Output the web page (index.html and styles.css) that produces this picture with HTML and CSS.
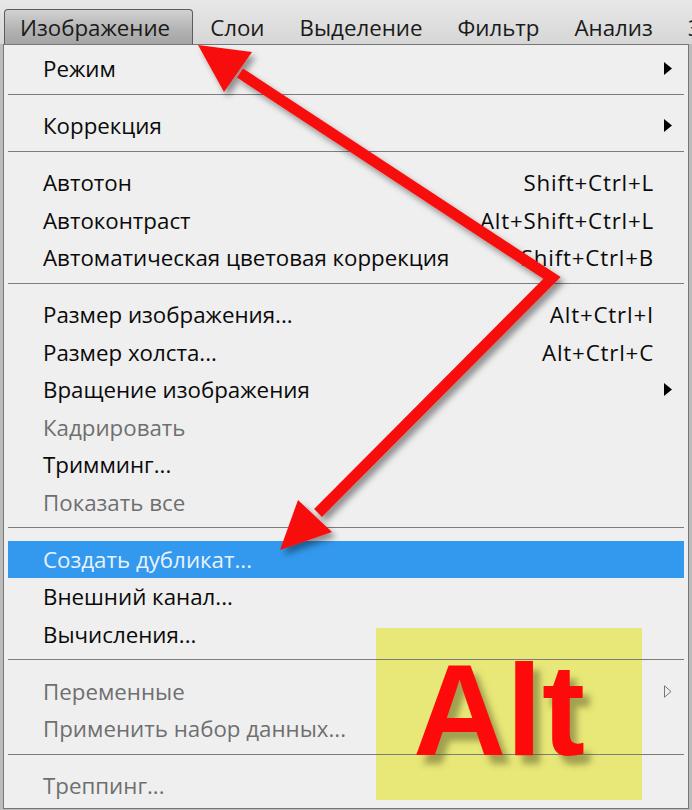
FILE: index.html
```html
<!DOCTYPE html>
<html lang="ru">
<head>
    <meta charset="UTF-8">
    <title>Меню Изображение</title>
    <link rel="stylesheet" href="styles.css">
</head>
<body>
    <div class="screen">
        <div class="menubar">
            <span class="mb-item active">Изображение</span>
            <span class="mb-item">Слои</span>
            <span class="mb-item">Выделение</span>
            <span class="mb-item">Фильтр</span>
            <span class="mb-item">Анализ</span>
            <span class="mb-item">3D</span>
        </div>

        <div class="menu">
            <!-- жёлтая плашка под пунктами -->
            <div class="note"></div>

            <ul class="menu-list">
                <li class="item"><span>Режим</span><span></span><svg class="arrow" viewBox="0 0 8 13"><path d="M0 0L8 6.5L0 13Z"/></svg></li>
                <li class="sep"></li>
                <li class="item"><span>Коррекция</span><span></span><svg class="arrow" viewBox="0 0 8 13"><path d="M0 0L8 6.5L0 13Z"/></svg></li>
                <li class="sep"></li>
                <li class="item"><span>Автотон</span><span class="key">Shift+Ctrl+L</span></li>
                <li class="item"><span>Автоконтраст</span><span class="key">Alt+Shift+Ctrl+L</span></li>
                <li class="item"><span>Автоматическая цветовая коррекция</span><span class="key">Shift+Ctrl+B</span></li>
                <li class="sep"></li>
                <li class="item"><span>Размер изображения...</span><span class="key">Alt+Ctrl+I</span></li>
                <li class="item"><span>Размер холста...</span><span class="key">Alt+Ctrl+C</span></li>
                <li class="item"><span>Вращение изображения</span><span></span><svg class="arrow" viewBox="0 0 8 13"><path d="M0 0L8 6.5L0 13Z"/></svg></li>
                <li class="item off"><span>Кадрировать</span></li>
                <li class="item"><span>Тримминг...</span></li>
                <li class="item off"><span>Показать все</span></li>
                <li class="sep"></li>
                <li class="item hl"><span>Создать дубликат...</span></li>
                <li class="item"><span>Внешний канал...</span></li>
                <li class="item"><span>Вычисления...</span></li>
                <li class="sep"></li>
                <li class="item off"><span>Переменные</span><span></span><svg class="arrow hollow" viewBox="0 0 8 13"><path d="M0.5 0.8L7 6.5L0.5 12.2Z"/></svg></li>
                <li class="item off"><span>Применить набор данных...</span></li>
                <li class="sep"></li>
                <li class="item off"><span>Треппинг...</span></li>
            </ul>

            <div class="note-text">Alt</div>
        </div>

        <!-- красные стрелки поверх скриншота -->
        <svg class="arrows" width="692" height="810" viewBox="0 0 692 810">
            <defs>
                <filter id="shade" x="-20%" y="-20%" width="140%" height="140%">
                    <feDropShadow dx="4" dy="5" stdDeviation="3" flood-color="#000" flood-opacity="0.4"/>
                </filter>
            </defs>
            <g filter="url(#shade)">
                <polyline points="240,73 552,278 318,513" fill="none" stroke="#f80f0f" stroke-width="11" stroke-linejoin="miter"/>
                <polygon points="198,45 252,52 224,92" fill="#f80f0f"/>
                <polygon points="280,550 298,500 332,532" fill="#f80f0f"/>
            </g>
        </svg>
    </div>
</body>
</html>
```

FILE: styles.css
```css
body {
    margin: 0;
    background: #bcbcbc;
    font-family: "Open Sans", "Noto Sans", sans-serif;
}
.screen {
    position: relative;
    width: 692px;
    height: 810px;
    overflow: hidden;
}
.menubar {
    height: 44px;
    display: flex;
    align-items: flex-end;
    padding-left: 4px;
    background: linear-gradient(#e8e8e8, #d6d6d6);
    font-size: 22.3px;
    white-space: nowrap;
    box-sizing: border-box;
}
.mb-item {
    height: 35px;
    line-height: 37px;
    padding: 0 17.5px;
    color: #1a1a1a;
    box-sizing: border-box;
}
.mb-item.active {
    padding: 0 21.5px 0 15px;
    line-height: 36px;
    border: 1px solid #5c5c5c;
    border-bottom: 0;
    border-radius: 4px 4px 0 0;
    background: linear-gradient(#d2d2d2, #b2b2b2 60%, #a4a4a4);
}

.menu {
    position: relative;
    margin-left: 3px;
    width: 686px;
    height: 765px;
    box-sizing: border-box;
    border: 1px solid #777;
    background: #efefef;
    padding: 5px 4px 0;
    font-size: 22.3px;
}
.menu-list {
    position: relative;
    z-index: 1;
    list-style: none;
    margin: 0;
    padding: 0;
}
.item {
    display: grid;
    grid-template-columns: 1fr auto 30px;
    height: 37.5px;
    line-height: 37.5px;
    padding-left: 35px;
    color: #0a0a0a;
    white-space: nowrap;
}
.item.off { color: #6f6f6f; }
.item.hl {
    background: #3399ee;
    color: #e9f2fc;
}
.key { letter-spacing: 0.8px; }
.arrow {
    width: 8px;
    height: 13px;
    align-self: center;
    margin-left: 10px;
    fill: #000;
}
.arrow.hollow {
    fill: none;
    stroke: #777;
    stroke-width: 1;
}
.sep {
    height: 6px;
    margin-bottom: 12.5px;
    border-bottom: 1px solid #7c7c7c;
}

.note {
    position: absolute;
    z-index: 0;
    left: 372px;
    top: 583px;
    width: 266px;
    height: 172px;
    background: #e8e878;
}
.note-text {
    position: absolute;
    z-index: 2;
    left: 409px;
    top: 600px;
    font-family: "Liberation Sans", Arial, sans-serif;
    font-weight: bold;
    font-size: 129px;
    line-height: 130px;
    color: #ff0a0a;
    text-shadow: 7px 9px 6px rgba(90, 90, 40, 0.5);
}

.arrows {
    position: absolute;
    left: 0;
    top: 0;
    z-index: 3;
}
```
